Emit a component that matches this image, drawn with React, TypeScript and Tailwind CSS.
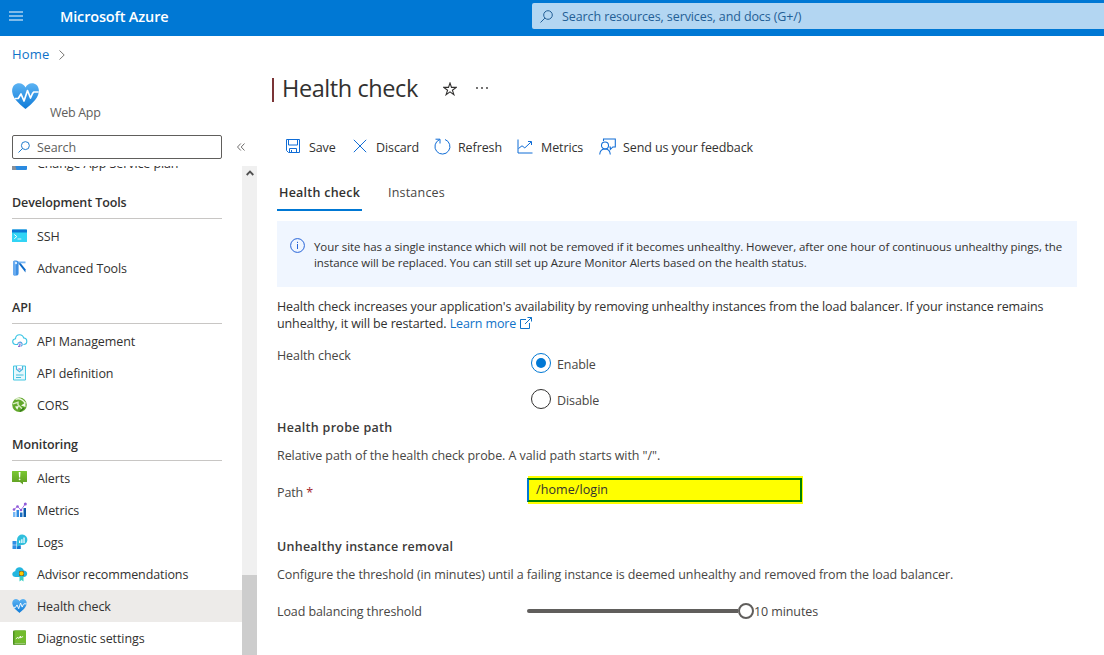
import React from "react";

type IconProps = { className?: string };

function HeartIcon({ className = "w-4 h-4" }: IconProps) {
  return (
    <svg className={className} viewBox="0 0 27 26">
      <defs>
        <linearGradient id="heart" x1="0" y1="0" x2="0" y2="1">
          <stop offset="0" stopColor="#5cb3f3" />
          <stop offset="1" stopColor="#0f7bd8" />
        </linearGradient>
      </defs>
      <path d="M13.5 26C11 23.500 1 17 .2 9 -.5 3 3.500.2 7 .2c3 0 5.300 1.700 6.500 4.200C14.700 1.900 17 .2 20 .2c3.500 0 7.500 2.800 6.800 8.800C26 17 16 23.500 13.500 26z" fill="url(#heart)" />
      <path d="M3 15.500h3.200L9 11l3 7 3.500-10.500 3 7.500 2-4.500 1.200-1.500h5" fill="none" stroke="#fff" strokeWidth="1.700" strokeLinejoin="round" />
    </svg>
  );
}

function SearchIcon({ className = "" }: IconProps) {
  return (
    <svg className={className} viewBox="0 0 13 13" fill="none" stroke="currentColor" strokeWidth="1">
      <circle cx="8" cy="5" r="4.300" />
      <path d="M4.900 8.100.5 12.500" />
    </svg>
  );
}

function PlanIcon() {
  return (
    <svg viewBox="0 0 16 16" className="h-4 w-4">
      <rect x="0" y="4" width="15" height="11" rx="1" fill="#2a8ae0" />
      <path d="M0 10h3l1.500 5H1a1 1 0 0 1-1-1z" fill="#8a8f96" />
    </svg>
  );
}

function SshIcon() {
  return (
    <svg viewBox="0 0 16 16" className="h-4 w-4">
      <rect x="0" y="1.500" width="15" height="12.500" rx="0.600" fill="#32d4f5" />
      <path d="M0 4.500V2.100a.6.600 0 0 1 .6-.6h13.800a.6.600 0 0 1 .6.600v2.400z" fill="#0b78d4" />
      <path d="m2.300 6.500 2.500 2.100-2.500 2.100" fill="none" stroke="#fff" />
      <path d="M5.500 11h3.800" stroke="#d4f6fd" />
    </svg>
  );
}

function ToolsIcon() {
  return (
    <svg viewBox="0 0 16 16" className="h-4 w-4">
      <path d="M6 1.500h7.500v1.800H6z" fill="#76b5f3" />
      <path d="M6.300 3.300h2.400l4.800 5.900v3.300z" fill="#0a69c9" />
      <rect x="1" y="0.500" width="5.600" height="15" rx="2.600" fill="#3d8fe3" />
      <rect x="1" y="0.500" width="3" height="15" rx="1.500" fill="#69abef" />
      <circle cx="4" cy="3" r="1.200" fill="#dbeeff" />
    </svg>
  );
}

function ApiManagementIcon() {
  return (
    <svg viewBox="0 0 16 16" className="h-4 w-4" fill="none">
      <path d="M6 11.500H3.500A3 3 0 0 1 .7 8.600c0-1.700 1.300-2.700 2.800-2.900C3.700 3.200 5.400 1.700 7.600 1.700c2.100 0 3.500 1.300 4 3.200 1.900.2 3.200 1.500 3.200 3.300 0 1.900-1.500 3.300-3.400 3.300" stroke="#38c4e4" strokeWidth="1.100" />
      <path d="M5.800 11.500a2.200 2.200 0 1 1 3.300 1.700" stroke="#4a9be0" strokeWidth="1.100" />
      <path d="M7.800 10.900v2.400H6M7.200 11h1.500" stroke="#8a6fd0" strokeWidth="1.200" />
    </svg>
  );
}

function ApiDefinitionIcon() {
  return (
    <svg viewBox="0 0 16 16" className="h-4 w-4" fill="none">
      <path d="M1.500 1h12v14h-12z" fill="#e4f8fc" stroke="#45c7e2" strokeWidth="1" />
      <path d="M4.500 1v3.200l3 2.500 3-2.500V1" fill="#fff" stroke="#45b5de" strokeWidth="1.200" />
      <path d="M6.300 4h2.500" stroke="#8a6fd0" strokeWidth="1.200" />
      <path d="M4 10h7.500M4 12.500h5" stroke="#48bddc" strokeWidth="1.100" />
    </svg>
  );
}

function CorsIcon() {
  return (
    <svg viewBox="0 0 16 16" className="h-4 w-4" fill="none">
      <circle cx="7.500" cy="7.800" r="7.300" fill="#62a82b" />
      <path d="M3.500 2.300c3-1.200 7 .2 9.800 3.900" stroke="#edf7df" strokeWidth="1.500" />
      <path d="M1 6.800 6 5.300v2.500l4 4" stroke="#d6ecc0" strokeWidth="1.400" />
      <path d="m9 8.500 4.500-3v4.500zM3 9.500 7 9 5.200 12.700z" fill="#f4faec" />
      <path d="M8 14.500 12 11" stroke="#34791a" strokeWidth="1.500" />
    </svg>
  );
}

function AlertsIcon() {
  return (
    <svg viewBox="0 0 16 16" className="h-4 w-4">
      <defs>
        <linearGradient id="alert" x1="0" y1="0" x2="0" y2="1">
          <stop offset="0" stopColor="#7bc832" />
          <stop offset="1" stopColor="#5e9c22" />
        </linearGradient>
      </defs>
      <path d="M.5 1h14a.5.500 0 0 1 .5.500v10a.5.500 0 0 1-.5.500H11v2.500L8 12H.5a.5.500 0 0 1-.5-.5v-10A.5.500 0 0 1 .5 1z" fill="url(#alert)" />
      <path d="M6.700 2h1.800l-.3 5.500H7z" fill="#fff" />
      <circle cx="7.600" cy="9.300" r=".9" fill="#fff" />
    </svg>
  );
}

function MetricsIcon() {
  return (
    <svg viewBox="0 0 16 16" className="h-4 w-4">
      <path d="M1 10h2.500v5H1z" fill="#76b8f5" />
      <path d="M4.500 8H7v7H4.500z" fill="#2f8ae0" />
      <path d="M8 10.500h2.500V15H8z" fill="#1a6fc4" />
      <path d="M11.500 6H14v9h-2.500z" fill="#0b5ba8" />
      <path d="M2 7.500 5.500 4.500l3.500 3.500 4.300-6" fill="none" stroke="#a878e8" strokeWidth="1" />
      <g fill="#8f5ad8">
        <circle cx="2" cy="7.500" r="1.300" />
        <circle cx="5.500" cy="4.500" r="1.300" />
        <circle cx="9" cy="8" r="1.300" />
        <circle cx="13.300" cy="2" r="1.500" />
      </g>
    </svg>
  );
}

function LogsIcon() {
  return (
    <svg viewBox="0 0 16 16" className="h-4 w-4">
      <path d="M.5 7h4v3.700h-4zM.5 11.300h4V15h-4z" fill="#2f8fe5" />
      <path d="M5 11.300h3.800V15H5z" fill="#1677cf" />
      <path d="M5 13V5.800A5.200 5.200 0 1 1 9.800 11H7.500z" fill="#30bfdd" />
      <path d="M7 6.500h1.300V9H7zM9.200 5.300h1.300V9H9.200zM11.400 3.500h1.300V9h-1.300z" fill="#f1fcff" />
    </svg>
  );
}

function AdvisorIcon() {
  return (
    <svg viewBox="0 0 16 16" className="h-4 w-4">
      <path d="M3.500 11C1.600 11 .3 9.800.3 8.200S1.600 5.500 3.200 5.300C3.500 2.700 5.300 1.300 7.600 1.300c2.200 0 3.700 1.300 4.200 3.300 2 .1 3.400 1.400 3.400 3.200S13.700 11 12 11z" fill="#24b6df" />
      <path d="M7.500 10.500v5l2-1.500 2 1.500v-5z" fill="#39cfc4" />
      <rect x="7" y="5" width="5" height="5" rx=".7" fill="#7d6a35" />
      <circle cx="9.500" cy="7.500" r="2" fill="#ffca00" />
    </svg>
  );
}

function DiagnosticIcon() {
  return (
    <svg viewBox="0 0 16 16" className="h-4 w-4">
      <rect x="1" y="0.500" width="13" height="14.500" rx="1" fill="#4f9221" />
      <rect x="2.500" y="0.500" width="11.500" height="12.800" rx="0.800" fill="#72bb2e" />
      <path d="M2.500 13.300H13.500v1h-11z" fill="#b9dc9a" />
      <path d="M3.800 8.800 6 7.300l.7 1.200L8.500 6v1.800l2.600-1.300" fill="none" stroke="#fff" strokeWidth=".9" />
    </svg>
  );
}

function SaveIcon() {
  return (
    <svg viewBox="0 0 14 14" className="mt-[-2px] h-[14px] w-[14px]" fill="none" stroke="#0f6cd6" strokeWidth="1">
      <path d="M.5.500h13v13h-11l-2-2zM2.500.500v5.500h9V.5M3.500 13.500V9.500h7v4M5.500 13.500v-2.500" />
    </svg>
  );
}

function RefreshIcon() {
  return (
    <svg viewBox="0 0 17 17" className="mt-[-2px] h-[17px] w-[17px]" fill="none" stroke="#0f6cd6" strokeWidth="1">
      <path d="M11 1.500a7.500 7.500 0 1 1-5.600.2M1.500 1.200h4.500v4.300" />
    </svg>
  );
}

function ChartIcon() {
  return (
    <svg viewBox="0 0 16 15" className="mt-[-2px] h-[15px] w-4" fill="none" stroke="#0f6cd6" strokeWidth="1">
      <path d="M1 .5v13.500H15.500M1.500 9.500 5 6.800l2.800 2.100 6.200-5.800M11 2.500h3.500V6" />
    </svg>
  );
}

function FeedbackIcon() {
  return (
    <svg viewBox="0 0 17 17" className="mt-[-2px] h-[17px] w-[17px]" fill="none" stroke="#0f6cd6" strokeWidth="1.050">
      <circle cx="6" cy="7.500" r="3.500" />
      <path d="M.7 16.500C1 13 3 11 6 11s5 2 5.300 5.500M4.500 3V1h11.800v8h-2.500l-2.500 2.500V9H10.300" />
    </svg>
  );
}

function NavItem({ icon, label, active }: { icon: React.ReactNode; label: string; active?: boolean }) {
  return (
    <div className={`flex h-8 shrink-0 items-center pl-3 text-[#323130] ${active ? "bg-[#edebe9]" : ""}`}>
      <span className="-mt-px mr-[9px]">{icon}</span>
      <span className="mt-[2px] whitespace-nowrap">{label}</span>
    </div>
  );
}

function NavHeading({ label }: { label: string }) {
  return (
    <div className="h-[41px] shrink-0 pl-3">
      <div className="flex h-[40px] w-[210px] items-start border-b border-[#c8c6c4] pt-[15px] font-semibold leading-[18px] text-[#323130]">{label}</div>
    </div>
  );
}

function Command({ icon, label, className }: { icon: React.ReactNode; label: string; className: string }) {
  return (
    <button className={`flex shrink-0 items-center text-[#323130] ${className}`}>
      {icon}
      <span className="mt-[2px] whitespace-nowrap">{label}</span>
    </button>
  );
}

function Radio({ label, checked }: { label: string; checked?: boolean }) {
  return (
    <label className="flex h-5 items-center gap-[6px]">
      <span className={`flex h-5 w-5 items-center justify-center rounded-full border ${checked ? "border-[#0078d4]" : "border-[#323130]"}`}>
        {checked && <span className="h-[10px] w-[10px] rounded-full bg-[#0078d4]" />}
      </span>
      <span className="mt-[4px]">{label}</span>
    </label>
  );
}

export default function App() {
  return (
    <div className="flex h-[655px] w-[1104px] flex-col overflow-hidden bg-white font-['Open_Sans','Noto_Sans',sans-serif] text-[12.5px] leading-[18px] tracking-[-0.1px] text-[#484644]">
      <header className="flex h-9 shrink-0 items-center bg-[#0078d4] pb-1">
        <div className="ml-[9px] flex w-[14px] flex-col gap-[2px]">
          <span className="h-[2px] bg-[#80bbe9]" />
          <span className="h-[2px] bg-[#80bbe9]" />
          <span className="h-[2px] bg-[#80bbe9]" />
        </div>
        <div className="ml-[37px] mt-[2px] w-[472px] text-[14.5px] font-semibold tracking-[-0.15px] text-white">Microsoft Azure</div>
        <div className="flex h-[26px] flex-1 items-center rounded-l-xs bg-[#b3d6f2] pl-2 text-[#235f96]">
          <SearchIcon className="mr-[9px] h-[13px] w-[13px]" />
          <span className="mt-[2px]">Search resources, services, and docs (G+/)</span>
        </div>
      </header>

      <div className="flex min-h-0 flex-1">
        <aside className="flex w-[257px] shrink-0 flex-col">
          <div className="flex h-9 items-center pl-3 text-[13px] tracking-[0.2px] text-[#0f72c8]">
            Home
            <svg viewBox="0 0 6 10" className="ml-[9px] mt-[2px] h-[10px] w-[6px]" fill="none" stroke="#797775">
              <path d="m.5.500 4.700 4.500L.5 9.500" />
            </svg>
          </div>
          <div className="flex h-[54px] pl-3 pt-[11px]">
            <HeartIcon className="h-[26px] w-[27px]" />
            <span className="ml-[11px] mt-[21px] tracking-[-0.3px] text-[#605e5c]">Web App</span>
          </div>
          <div className="mt-[9px] flex h-6 items-center pl-3">
            <div className="flex h-6 w-[210px] items-center rounded-xs border border-[#605e5c] pl-[5px] text-[#605e5c]">
              <SearchIcon className="mr-[7px] h-3 w-3 text-[#0f72c8]" />
              <span className="mt-[2px]">Search</span>
            </div>
            <svg viewBox="0 0 8 8" className="ml-[15px] h-2 w-2" fill="none" stroke="#605e5c" strokeWidth=".9">
              <path d="M3.800.500.500 4l3.300 3.500M7.500.500 4.200 4l3.300 3.500" />
            </svg>
          </div>
          <div className="mt-[7px] flex min-h-0 flex-1 overflow-hidden">
            <nav className="-mt-[19px] flex w-[242px] flex-col">
              <NavItem icon={<PlanIcon />} label="Change App Service plan" />
              <NavHeading label="Development Tools" />
              <NavItem icon={<SshIcon />} label="SSH" />
              <NavItem icon={<ToolsIcon />} label="Advanced Tools" />
              <NavHeading label="API" />
              <NavItem icon={<ApiManagementIcon />} label="API Management" />
              <NavItem icon={<ApiDefinitionIcon />} label="API definition" />
              <NavItem icon={<CorsIcon />} label="CORS" />
              <NavHeading label="Monitoring" />
              <NavItem icon={<AlertsIcon />} label="Alerts" />
              <NavItem icon={<MetricsIcon />} label="Metrics" />
              <NavItem icon={<LogsIcon />} label="Logs" />
              <NavItem icon={<AdvisorIcon />} label="Advisor recommendations" />
              <NavItem icon={<HeartIcon className="h-[14px] w-4 pr-px" />} label="Health check" active />
              <NavItem icon={<DiagnosticIcon />} label="Diagnostic settings" />
            </nav>
            <div className="flex w-[15px] flex-col items-center bg-[#f0f0f0]">
              <svg viewBox="0 0 8 6" className="mt-1 h-[6px] w-2 shrink-0" fill="none" stroke="#505050" strokeWidth="1.800">
                <path d="m.7 5 3.300-3.400L7.300 5" />
              </svg>
              <div className="mt-auto h-20 w-full bg-[#cdcdcd]" />
            </div>
          </div>
        </aside>

        <main className="flex min-w-0 flex-1 flex-col pl-5">
          <div className="-ml-[5px] mt-9 flex h-[32px] shrink-0 items-center text-[#323130]">
            <span className="mt-[3px] h-6 w-[2px] bg-[#7b3436]" />
            <h1 className="-mt-px ml-[8px] w-[161px] whitespace-nowrap text-[23.5px] leading-8 tracking-[-0.42px]">Health check</h1>
            <svg viewBox="0 0 14 14" className="mt-px h-[14px] w-[14px]" fill="none" stroke="#323130" strokeWidth="1.100">
              <path d="m7 1 1.500 4.400h4.700L9.400 8.200l1.500 4.500L7 9.900l-3.900 2.800 1.500-4.500L.8 5.400h4.700z" />
            </svg>
            <svg viewBox="0 0 12 2" className="ml-[19px] h-[2px] w-3" fill="#323130">
              <circle cx="1" cy="1" r=".9" />
              <circle cx="6" cy="1" r=".9" />
              <circle cx="11" cy="1" r=".9" />
            </svg>
          </div>

          <div className="mt-[31px] flex h-6 shrink-0 items-center pl-[9px]">
            <Command icon={<SaveIcon />} label="Save" className="w-[67px] gap-[9px]" />
            <Command
              icon={
                <svg viewBox="0 0 14 14" className="-mt-[2px] h-[14px] w-[14px]" fill="none" stroke="#0f6cd6" strokeWidth="1">
                  <path d="m.8.800 12.400 12.400M13.200.800.800 13.200" />
                </svg>
              }
              label="Discard"
              className="w-[81px] gap-[9px]"
            />
            <Command icon={<RefreshIcon />} label="Refresh" className="w-[83px] gap-[7px]" />
            <Command icon={<ChartIcon />} label="Metrics" className="w-[82px] gap-2" />
            <Command icon={<FeedbackIcon />} label="Send us your feedback" className="gap-[7px]" />
          </div>

          <div className="mt-[17px] flex h-[35px] shrink-0 gap-[26px]">
            <div className="w-[85px] whitespace-nowrap border-b-2 border-[#0078d4] pl-[2px] pt-[8px] font-semibold tracking-[0.25px] text-[#323130]">Health check</div>
            <div className="pt-[8px] tracking-[0.2px]">Instances</div>
          </div>

          <div className="mt-[10px] flex h-[66px] w-[800px] shrink-0 bg-[#f0f6ff] pl-[13px] pt-[17px] text-[11.5px] leading-4 text-[#323130]">
            <svg viewBox="0 0 15 15" className="h-[15px] w-[15px]" fill="none" stroke="#2563d8">
              <circle cx="7.500" cy="7.500" r="6.900" />
              <path d="M7.500 6v5M7.500 3.800v1.200" />
            </svg>
            <p className="ml-[9px] mt-px whitespace-nowrap tracking-[-0.07px]">
              Your site has a single instance which will not be removed if it becomes unhealthy. However, after one hour of continuous unhealthy pings, the
              <br />
              instance will be replaced. You can still set up Azure Monitor Alerts based on the health status.
            </p>
          </div>

          <p className="mt-[11px] shrink-0 whitespace-nowrap leading-[17px] tracking-[-0.115px] text-[#323130]">
            Health check increases your application's availability by removing unhealthy instances from the load balancer. If your instance remains
            <br />
            unhealthy, it will be restarted.{" "}
            <a className="text-[#0f72c8]">
              Learn more
              <svg viewBox="0 0 12 12" className="ml-[4px] inline h-3 w-3 align-[-1px]" fill="none" stroke="currentColor">
                <path d="M6 2.500H.5v9h9V6M7.500.500h4v4M11.500.500 5 7" />
              </svg>
            </a>
          </p>

          <div className="mt-[14px] flex shrink-0">
            <span className="mt-px w-[254px]">Health check</span>
            <div className="mt-[7px] flex flex-col gap-4">
              <Radio label="Enable" checked />
              <Radio label="Disable" />
            </div>
          </div>

          <h2 className="mt-[10px] shrink-0 font-semibold tracking-[0.3px] text-[#3b3a39]">Health probe path</h2>
          <p className="mt-[10px] shrink-0 tracking-[-0.07px]">Relative path of the health check probe. A valid path starts with "/".</p>
          <div className="mt-[13px] flex h-6 shrink-0 items-center">
            <span className="w-[250px] pt-[5px]">
              Path <span className="text-[#a4262c]">*</span>
            </span>
            <div className="flex h-6 w-[275px] items-center border-2 border-[#008000] border-l-[#0078d4] bg-[#ffff00] pl-[7px] tracking-[0.08px] text-[#323130] shadow-[1px_-2px_0_0_#ffff00,1px_2px_0_0_#ffff00]">/home/login</div>
          </div>

          <h2 className="mt-[36px] shrink-0 font-semibold tracking-[0.25px] text-[#3b3a39]">Unhealthy instance removal</h2>
          <p className="mt-[10px] shrink-0 whitespace-nowrap tracking-[-0.09px]">
            Configure the threshold (in minutes) until a failing instance is deemed unhealthy and removed from the load balancer.
          </p>
          <div className="mt-[18px] flex h-[18px] shrink-0 items-center">
            <span className="mt-[2px] w-[250px]">Load balancing threshold</span>
            <span className="h-1 w-[211px] rounded-l-full bg-[#605e5c]" />
            <span className="h-4 w-4 rounded-full border-2 border-[#605e5c] bg-white" />
            <span className="mt-[2px]">10 minutes</span>
          </div>
        </main>
      </div>
    </div>
  );
}
